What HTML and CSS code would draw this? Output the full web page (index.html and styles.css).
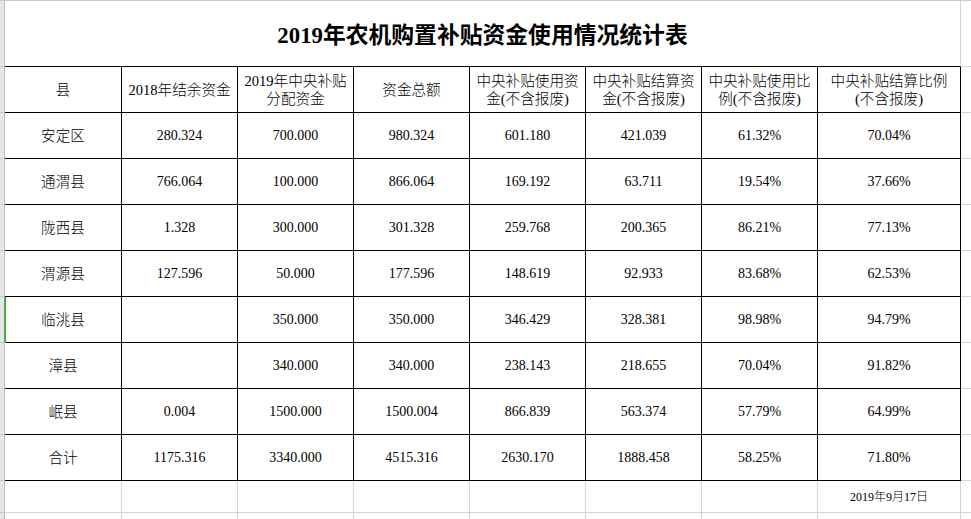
FILE: index.html
```html
<!DOCTYPE html>
<html lang="zh-CN">
<head>
<meta charset="utf-8">
<title>2019年农机购置补贴资金使用情况统计表</title>
<link rel="stylesheet" href="styles.css">
</head>
<body>
<div class="sheet">
  <div class="c strip"></div>
  <div class="c title">2019年农机购置补贴资金使用情况统计表</div>
  <div class="c fill"></div>

  <div class="c strip"></div>
  <div class="c t hd">县</div>
  <div class="c t hd">2018年结余资金</div>
  <div class="c t hd">2019年中央补贴<br>分配资金</div>
  <div class="c t hd">资金总额</div>
  <div class="c t hd">中央补贴使用资<br>金(不含报废)</div>
  <div class="c t hd">中央补贴结算资<br>金(不含报废)</div>
  <div class="c t hd">中央补贴使用比<br>例(不含报废)</div>
  <div class="c t hd">中央补贴结算比例<br>(不含报废)</div>
  <div class="c fill"></div>

  <div class="c strip"></div>
  <div class="c t name">安定区</div>
  <div class="c t num">280.324</div>
  <div class="c t num">700.000</div>
  <div class="c t num">980.324</div>
  <div class="c t num">601.180</div>
  <div class="c t num">421.039</div>
  <div class="c t num">61.32%</div>
  <div class="c t num">70.04%</div>
  <div class="c fill"></div>

  <div class="c strip"></div>
  <div class="c t name">通渭县</div>
  <div class="c t num">766.064</div>
  <div class="c t num">100.000</div>
  <div class="c t num">866.064</div>
  <div class="c t num">169.192</div>
  <div class="c t num">63.711</div>
  <div class="c t num">19.54%</div>
  <div class="c t num">37.66%</div>
  <div class="c fill"></div>

  <div class="c strip"></div>
  <div class="c t name">陇西县</div>
  <div class="c t num">1.328</div>
  <div class="c t num">300.000</div>
  <div class="c t num">301.328</div>
  <div class="c t num">259.768</div>
  <div class="c t num">200.365</div>
  <div class="c t num">86.21%</div>
  <div class="c t num">77.13%</div>
  <div class="c fill"></div>

  <div class="c strip"></div>
  <div class="c t name">渭源县</div>
  <div class="c t num">127.596</div>
  <div class="c t num">50.000</div>
  <div class="c t num">177.596</div>
  <div class="c t num">148.619</div>
  <div class="c t num">92.933</div>
  <div class="c t num">83.68%</div>
  <div class="c t num">62.53%</div>
  <div class="c fill"></div>

  <div class="c strip sel"></div>
  <div class="c t name">临洮县</div>
  <div class="c t num"></div>
  <div class="c t num">350.000</div>
  <div class="c t num">350.000</div>
  <div class="c t num">346.429</div>
  <div class="c t num">328.381</div>
  <div class="c t num">98.98%</div>
  <div class="c t num">94.79%</div>
  <div class="c fill"></div>

  <div class="c strip"></div>
  <div class="c t name">漳县</div>
  <div class="c t num"></div>
  <div class="c t num">340.000</div>
  <div class="c t num">340.000</div>
  <div class="c t num">238.143</div>
  <div class="c t num">218.655</div>
  <div class="c t num">70.04%</div>
  <div class="c t num">91.82%</div>
  <div class="c fill"></div>

  <div class="c strip"></div>
  <div class="c t name">岷县</div>
  <div class="c t num">0.004</div>
  <div class="c t num">1500.000</div>
  <div class="c t num">1500.004</div>
  <div class="c t num">866.839</div>
  <div class="c t num">563.374</div>
  <div class="c t num">57.79%</div>
  <div class="c t num">64.99%</div>
  <div class="c fill"></div>

  <div class="c strip"></div>
  <div class="c t name">合计</div>
  <div class="c t num">1175.316</div>
  <div class="c t num">3340.000</div>
  <div class="c t num">4515.316</div>
  <div class="c t num">2630.170</div>
  <div class="c t num">1888.458</div>
  <div class="c t num">58.25%</div>
  <div class="c t num">71.80%</div>
  <div class="c fill"></div>

  <div class="c strip"></div>
  <div class="c"></div>
  <div class="c"></div>
  <div class="c"></div>
  <div class="c"></div>
  <div class="c"></div>
  <div class="c"></div>
  <div class="c"></div>
  <div class="c date">2019年9月17日</div>
  <div class="c fill"></div>

  <div class="c strip"></div>
  <div class="c"></div>
  <div class="c"></div>
  <div class="c"></div>
  <div class="c"></div>
  <div class="c"></div>
  <div class="c"></div>
  <div class="c"></div>
  <div class="c"></div>
  <div class="c fill"></div>
</div>
</body>
</html>
```

FILE: styles.css
```css
html, body {
  margin: 0;
  padding: 0;
  background: #ffffff;
  overflow: hidden;
}

.sheet {
  display: grid;
  grid-template-columns: 5px 117px repeat(6, 116px) 143px 10px;
  grid-template-rows: 66px repeat(9, 46px) 32px 32px;
  border-top: 1px solid #c8c8c8;
  font-family: "Liberation Serif", "Noto Sans CJK SC", serif;
  color: #000000;
  width: 971px;
}

.c {
  box-sizing: border-box;
  border-right: 1px solid #d4d4d4;
  border-bottom: 1px solid #d4d4d4;
  display: flex;
  align-items: center;
  justify-content: center;
  text-align: center;
  font-size: 14.6px;
  font-weight: 300;
  line-height: 18px;
  white-space: nowrap;
}

.strip {
  background: #e6e6e6;
  border-right: 1px solid #bdbdbd;
  border-bottom: 1px solid #c8c8c8;
}

.strip.sel {
  border-right-color: #4ca84c;
  box-shadow: 1px 0 0 #4ca84c;
  position: relative;
  z-index: 1;
}

.title {
  grid-column: span 8;
  border-bottom-color: #000000;
  font-size: 22.8px;
  font-weight: 700;
  padding-top: 4px;
}

.t {
  border-right-color: #000000;
  border-bottom-color: #000000;
}

.num {
  font-size: 14px;
}

.fill {
  border-right: none;
}

.date {
  font-size: 12px;
}
```
